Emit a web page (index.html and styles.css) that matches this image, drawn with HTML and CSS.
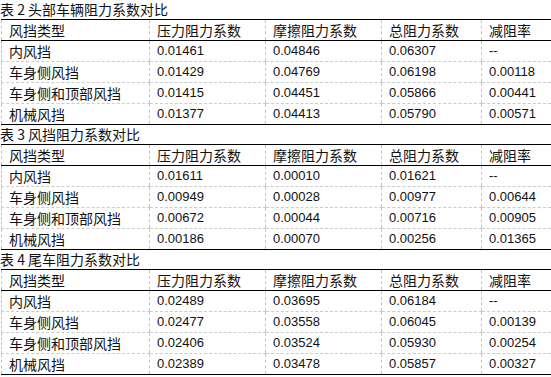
FILE: index.html
```html
<!DOCTYPE html>
<html lang="zh-CN">
<head>
  <meta charset="UTF-8">
  <meta name="viewport" content="width=device-width, initial-scale=1.0">
  <title>风挡阻力系数对比</title>
  <link rel="stylesheet" href="styles.css">
</head>
<body>
  <div class="page">
    <div class="block">
      <div class="caption">表 2 头部车辆阻力系数对比</div>
      <table class="data">
        <thead>
          <tr><th>风挡类型</th><th>压力阻力系数</th><th>摩擦阻力系数</th><th>总阻力系数</th><th>减阻率</th></tr>
        </thead>
        <tbody>
          <tr><td>内风挡</td><td class="num">0.01461</td><td class="num">0.04846</td><td class="num">0.06307</td><td class="num">--</td></tr>
          <tr><td>车身侧风挡</td><td class="num">0.01429</td><td class="num">0.04769</td><td class="num">0.06198</td><td class="num">0.00118</td></tr>
          <tr><td>车身侧和顶部风挡</td><td class="num">0.01415</td><td class="num">0.04451</td><td class="num">0.05866</td><td class="num">0.00441</td></tr>
          <tr><td>机械风挡</td><td class="num">0.01377</td><td class="num">0.04413</td><td class="num">0.05790</td><td class="num">0.00571</td></tr>
        </tbody>
      </table>
    </div>

    <div class="block">
      <div class="caption">表 3 风挡阻力系数对比</div>
      <table class="data">
        <thead>
          <tr><th>风挡类型</th><th>压力阻力系数</th><th>摩擦阻力系数</th><th>总阻力系数</th><th>减阻率</th></tr>
        </thead>
        <tbody>
          <tr><td>内风挡</td><td class="num">0.01611</td><td class="num">0.00010</td><td class="num">0.01621</td><td class="num">--</td></tr>
          <tr><td>车身侧风挡</td><td class="num">0.00949</td><td class="num">0.00028</td><td class="num">0.00977</td><td class="num">0.00644</td></tr>
          <tr><td>车身侧和顶部风挡</td><td class="num">0.00672</td><td class="num">0.00044</td><td class="num">0.00716</td><td class="num">0.00905</td></tr>
          <tr><td>机械风挡</td><td class="num">0.00186</td><td class="num">0.00070</td><td class="num">0.00256</td><td class="num">0.01365</td></tr>
        </tbody>
      </table>
    </div>

    <div class="block">
      <div class="caption">表 4 尾车阻力系数对比</div>
      <table class="data">
        <thead>
          <tr><th>风挡类型</th><th>压力阻力系数</th><th>摩擦阻力系数</th><th>总阻力系数</th><th>减阻率</th></tr>
        </thead>
        <tbody>
          <tr><td>内风挡</td><td class="num">0.02489</td><td class="num">0.03695</td><td class="num">0.06184</td><td class="num">--</td></tr>
          <tr><td>车身侧风挡</td><td class="num">0.02477</td><td class="num">0.03558</td><td class="num">0.06045</td><td class="num">0.00139</td></tr>
          <tr><td>车身侧和顶部风挡</td><td class="num">0.02406</td><td class="num">0.03524</td><td class="num">0.05930</td><td class="num">0.00254</td></tr>
          <tr><td>机械风挡</td><td class="num">0.02389</td><td class="num">0.03478</td><td class="num">0.05857</td><td class="num">0.00327</td></tr>
        </tbody>
      </table>
    </div>
  </div>
</body>
</html>
```

FILE: styles.css
```css
body {
  margin: 0;
  background: #fff;
  color: #111;
  font-family: "Noto Sans CJK SC", sans-serif;
  font-size: 14px;
  overflow: hidden;
}
.page {
  width: 551px;
}
.block {
  padding-left: 1px;
}
.caption {
  height: 19px;
  line-height: 18px;
  margin-left: -1px;
  white-space: nowrap;
}
.data {
  border-collapse: collapse;
  table-layout: fixed;
  width: 550px;
}
.data th,
.data td {
  height: 20px;
  padding: 0 0 0 7px;
  line-height: 20px;
  font-weight: normal;
  text-align: left;
  white-space: nowrap;
  border-left: 1px dashed #c4c4c4;
  border-bottom: 1px dashed #cccccc;
}
.data th {
  border-top: 1px solid #000;
  border-bottom: 1px solid #000;
}
.data tbody tr:last-child td {
  border-bottom: 1px solid #000;
}
.data th:nth-child(1) { width: 140px; }
.data th:nth-child(2) { width: 108px; }
.data th:nth-child(3) { width: 108px; }
.data th:nth-child(4) { width: 92px; }
.num {
  font-family: "Liberation Sans", "Noto Sans CJK SC", sans-serif;
  font-size: 13px;
}
```
